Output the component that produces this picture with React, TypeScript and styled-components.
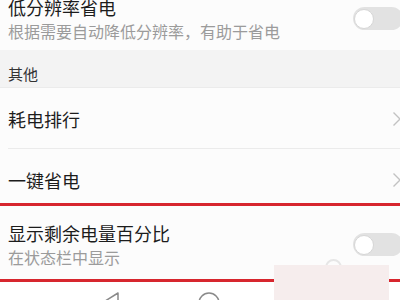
import React from "react";
import styled, { createGlobalStyle } from "styled-components";

const Global = createGlobalStyle`
  html, body { margin: 0; padding: 0; background: #fcfcfc; }
  body { font-family: "Noto Sans CJK SC", "Noto Sans", sans-serif; }
`;

const Screen = styled.div`
  position: relative;
  width: 400px;
  height: 300px;
  overflow: hidden;
  background: #fcfcfc;
`;

const List = styled.div`
  display: flex;
  flex-direction: column;
`;

const ToggleRow = styled.div<{ $first?: boolean }>`
  display: flex;
  align-items: center;
  justify-content: space-between;
  padding: ${(p) => (p.$first ? "12px 0 9px 8px" : "12px 0 12px 8px")};
  margin-top: ${(p) => (p.$first ? "-16px" : "0")};
  background: #fcfcfc;
`;

const TextBlock = styled.div`
  display: flex;
  flex-direction: column;
  gap: 3px;
`;

const Title = styled.div`
  font-size: 18px;
  line-height: 22px;
  color: #1c1c1c;
`;

const Subtitle = styled.div`
  font-size: 16px;
  line-height: 20px;
  color: #9b9b9b;
`;

const Track = styled.div`
  flex: none;
  width: 50px;
  height: 23px;
  margin-right: -3px;
  border-radius: 12px;
  background: #e2e2e2;
  display: flex;
  align-items: center;
  padding-left: 1px;
  box-sizing: border-box;
`;

const Knob = styled.div`
  width: 20px;
  height: 20px;
  border-radius: 50%;
  background: #ffffff;
  border: 1px solid #d6d6d6;
  box-sizing: border-box;
`;

const SectionHeader = styled.div`
  height: 38px;
  box-sizing: border-box;
  padding: 14px 8px 3px;
  background: #f3f3f3;
  border-bottom: 1px solid #ebebeb;
  font-size: 15px;
  line-height: 20px;
  color: #333333;
`;

const NavRow = styled.div<{ $divider?: boolean }>`
  position: relative;
  height: 61px;
  box-sizing: border-box;
  padding-left: 8px;
  display: flex;
  align-items: center;
  justify-content: space-between;
  background: #fcfcfc;
  &::after {
    content: "";
    display: ${(p) => (p.$divider ? "block" : "none")};
    position: absolute;
    left: 8px;
    right: 0;
    bottom: 0;
    height: 1px;
    background: #ebebeb;
  }
`;

const Chevron = styled.svg`
  flex: none;
  width: 10px;
  height: 16px;
  margin-right: -2px;
`;

const NavBar = styled.div`
  display: flex;
  justify-content: center;
  gap: 78px;
  padding: 13px 0 0 18px;
  height: 40px;
  background: #ffffff;
`;

const NavIcon = styled.svg`
  flex: none;
`;

const Highlight = styled.div`
  position: absolute;
  left: -6px;
  right: -6px;
  top: 203px;
  height: 79px;
  box-sizing: border-box;
  border-top: 3px solid #d7262e;
  border-bottom: 3px solid #d7262e;
  pointer-events: none;
`;

const WatermarkRing = styled.div`
  position: absolute;
  left: 325px;
  top: 259px;
  width: 17px;
  height: 17px;
  border-radius: 50%;
  border: 2px solid #e6e6e6;
  box-sizing: border-box;
`;

const Watermark = styled.div`
  position: absolute;
  left: 274px;
  top: 265px;
  width: 115px;
  height: 40px;
  background: #f6eded;
`;

const Toggle = () => (
  <Track>
    <Knob />
  </Track>
);

const Arrow = () => (
  <Chevron viewBox="0 0 10 16">
    <polyline
      points="1.5,1.5 8,8 1.5,14.5"
      fill="none"
      stroke="#c2c2c2"
      strokeWidth="1.4"
    />
  </Chevron>
);

export default function App() {
  return (
    <>
      <Global />
      <Screen>
        <List>
          <ToggleRow $first>
            <TextBlock>
              <Title>低分辨率省电</Title>
              <Subtitle>根据需要自动降低分辨率，有助于省电</Subtitle>
            </TextBlock>
            <Toggle />
          </ToggleRow>
          <SectionHeader>其他</SectionHeader>
          <NavRow $divider>
            <Title>耗电排行</Title>
            <Arrow />
          </NavRow>
          <NavRow>
            <Title>一键省电</Title>
            <Arrow />
          </NavRow>
          <ToggleRow>
            <TextBlock>
              <Title>显示剩余电量百分比</Title>
              <Subtitle>在状态栏中显示</Subtitle>
            </TextBlock>
            <Toggle />
          </ToggleRow>
          <NavBar>
            <NavIcon width="20" height="22" viewBox="0 0 20 22">
              <polygon
                points="18,1 2,11 18,21"
                fill="none"
                stroke="#8a8a8a"
                strokeWidth="1.5"
                strokeLinejoin="round"
              />
            </NavIcon>
            <NavIcon width="22" height="22" viewBox="0 0 22 22">
              <circle cx="11" cy="11" r="10" fill="none" stroke="#8a8a8a" strokeWidth="1.5" />
            </NavIcon>
            <NavIcon width="20" height="22" viewBox="0 0 20 22">
              <rect x="2" y="2" width="16" height="16" rx="1" fill="none" stroke="#8a8a8a" strokeWidth="1.5" />
            </NavIcon>
          </NavBar>
        </List>
        <Highlight />
        <WatermarkRing />
        <Watermark />
      </Screen>
    </>
  );
}
